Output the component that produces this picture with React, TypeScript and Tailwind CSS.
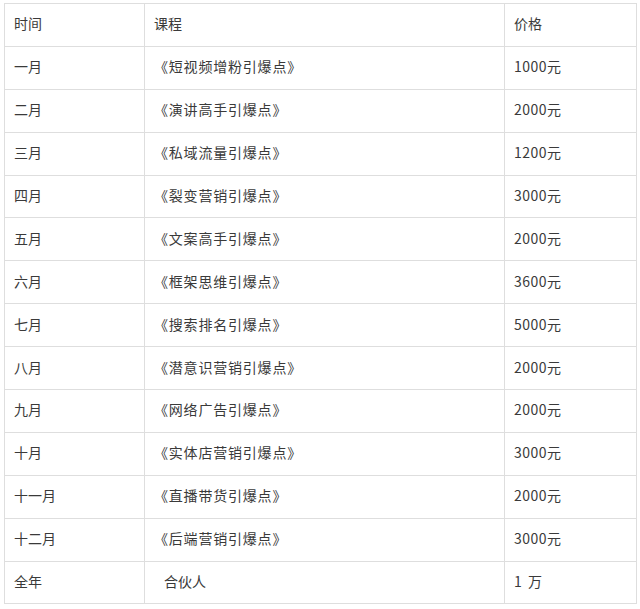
const rows: [string, string, string][] = [
  ["一月", "《短视频增粉引爆点》", "1000元"],
  ["二月", "《演讲高手引爆点》", "2000元"],
  ["三月", "《私域流量引爆点》", "1200元"],
  ["四月", "《裂变营销引爆点》", "3000元"],
  ["五月", "《文案高手引爆点》", "2000元"],
  ["六月", "《框架思维引爆点》", "3600元"],
  ["七月", "《搜索排名引爆点》", "5000元"],
  ["八月", "《潜意识营销引爆点》", "2000元"],
  ["九月", "《网络广告引爆点》", "2000元"],
  ["十月", "《实体店营销引爆点》", "3000元"],
  ["十一月", "《直播带货引爆点》", "2000元"],
  ["十二月", "《后端营销引爆点》", "3000元"],
];

const cell =
  "border border-[#dedede] px-[9px] pb-[3px] align-middle font-normal text-left";

export default function App() {
  return (
    <div className="h-[609px] w-[640px] bg-white pl-[4px] pt-[3px] text-[14px] text-[#3a3a3a] [font-family:'Noto_Sans_CJK_SC','Microsoft_YaHei',sans-serif]">
      <table className="w-[632px] table-fixed border-collapse leading-none">
        <colgroup>
          <col className="w-[140px]" />
          <col className="w-[360px]" />
          <col className="w-[132px]" />
        </colgroup>
        <tbody>
          <tr className="h-[42.9px]">
            <td className={cell}>时间</td>
            <td className={cell}>课程</td>
            <td className={cell}>价格</td>
          </tr>
          {rows.map(([month, course, price]) => (
            <tr key={month} className="h-[42.9px]">
              <td className={cell}>{month}</td>
              <td className={`${cell} tracking-[0.8px]`}>{course}</td>
              <td className={`${cell} tracking-[0.5px]`}>{price}</td>
            </tr>
          ))}
          <tr className="h-[42px]">
            <td className={cell}>全年</td>
            <td className={cell}>
              <span className="pl-[10px]">合伙人</span>
            </td>
            <td className={cell}>
              <span className="whitespace-pre">1  万</span>
            </td>
          </tr>
        </tbody>
      </table>
    </div>
  );
}
